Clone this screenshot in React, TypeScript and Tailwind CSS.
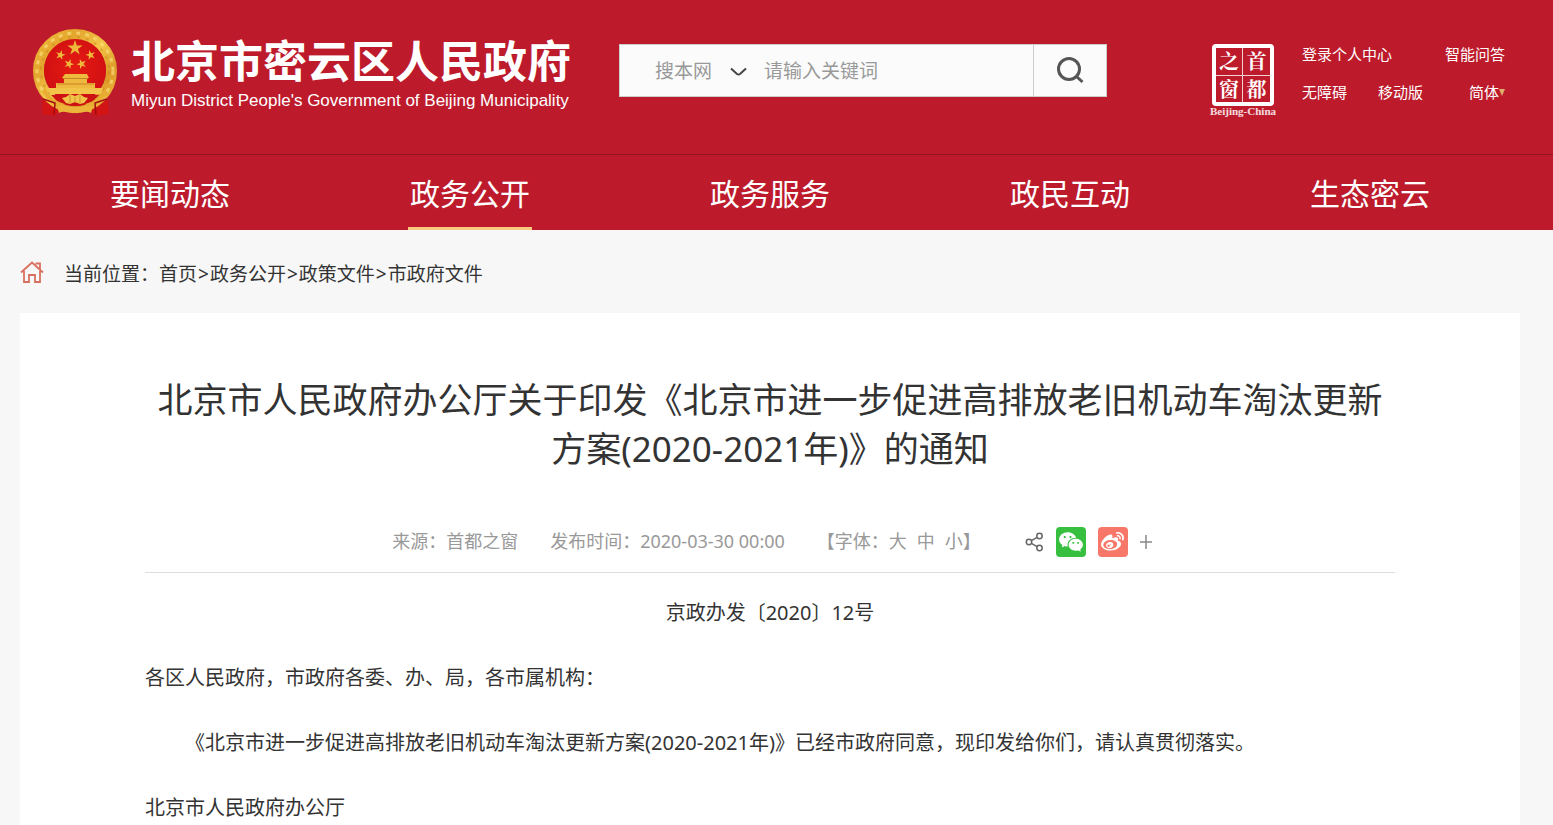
import React from 'react';
import { RiWechatFill, RiWeiboFill } from 'react-icons/ri';

const STAR = '0,-1 0.225,-0.309 0.951,-0.309 0.363,0.118 0.588,0.809 0,0.382 -0.588,0.809 -0.363,0.118 -0.951,-0.309 -0.225,-0.309';

function Star({ x, y, r, turn = 0 }: { x: number; y: number; r: number; turn?: number }) {
  return <polygon points={STAR} transform={`translate(${x} ${y}) rotate(${turn}) scale(${r})`} fill="#f0b83a" />;
}

function Emblem() {
  return (
    <svg viewBox="0 0 86 88" className="h-[88px] w-[86px] shrink-0" aria-hidden="true">
      <defs>
        <linearGradient id="gold" x1="0" y1="0" x2="1" y2="1">
          <stop offset="0" stopColor="#efb93a" />
          <stop offset="0.25" stopColor="#e3a52d" />
          <stop offset="0.5" stopColor="#f3c648" />
          <stop offset="0.75" stopColor="#dd9a28" />
          <stop offset="1" stopColor="#f0bd3e" />
        </linearGradient>
        <radialGradient id="field" cx="0.5" cy="0.45" r="0.6">
          <stop offset="0" stopColor="#e51b12" />
          <stop offset="1" stopColor="#cf0f12" />
        </radialGradient>
      </defs>
      <path d="M10 66h64l2 19-14 2-4-6H26l-4 6-13-2z" fill="#d21414" />
      <circle cx="42" cy="42" r="36.500" fill="none" stroke="url(#gold)" strokeWidth="11" />
      <circle cx="42" cy="42" r="38" fill="none" stroke="#f9dc78" strokeWidth="3" strokeDasharray="4 5" opacity="0.7" />
      <circle cx="42" cy="42" r="34" fill="none" stroke="#c9851f" strokeWidth="2" strokeDasharray="3 6" opacity="0.5" />
      <circle cx="42" cy="41" r="31" fill="url(#field)" />
      <Star x={42} y={19} r={8} />
      <Star x={27.5} y={26} r={5.2} turn={15} />
      <Star x={57.500} y={26} r={5.2} turn={-15} />
      <Star x={36} y={35} r={5.2} turn={20} />
      <Star x={48.500} y={35} r={5.2} turn={-20} />
      <path d="M32 45h22l2 4h-2v5h8v6H23v-6h8v-5h-2z" fill="#eeb93f" />
      <path d="M30 49.500h25M24 55h37" stroke="#c98322" strokeWidth="1" />
      <path d="M14 59h56l-2 6H17z" fill="#f3c44a" />
      <path d="M18 66h48l-6 6c-6 3-10 5-18 5s-12-2-18-5z" fill="#cc1213" />
      <path d="M12 59c4 9 11 14 20 16l-5 4c-8-3-14-9-17-16zM72 59c-4 9-11 14-20 16l5 4c8-3 14-9 17-16z" fill="#e8ac33" />
      <path d="M33 68l4-3 5 2 5-2 4 3 4 1-4 5-4 1-5-2-5 2-4-1-4-5z" fill="#f3c44a" />
      <path d="M37 66v8M42 68v6M47 66v8" stroke="#cf8e25" strokeWidth="1" />
      <path d="M24 77c8-2 11 2 18 1 7 1 10-3 18-1l-2 7c-7-3-10 1-16 0-6 1-9-3-16 0z" fill="#ecb439" />
      <path d="M10 70l12 4-1 12M74 70l-12 4 1 12" fill="none" stroke="#a00d10" strokeWidth="1.500" />
    </svg>
  );
}

function CapitalWindow() {
  return (
    <a href="#capital" className="flex w-[70px] shrink-0 flex-col items-center text-white" aria-label="首都之窗">
      <span className="grid h-[62px] w-[62px] grid-cols-2 rounded-sm border-4 border-white font-['Noto_Serif_CJK_SC','Noto_Sans_CJK_SC',serif] text-[20px] leading-[26px] font-bold">
        <span className="border-r border-b border-white/80 text-center">之</span>
        <span className="border-b border-white/80 text-center">首</span>
        <span className="border-r border-white/80 text-center">窗</span>
        <span className="text-center">都</span>
      </span>
      <span className="font-['Liberation_Serif',serif] text-[11px] leading-[10px] font-bold text-white/85">Beijing-China</span>
    </a>
  );
}

const navItems = ['要闻动态', '政务公开', '政务服务', '政民互动', '生态密云'];
const crumbs = ['首页', '政务公开', '政策文件', '市政府文件'];

function Header() {
  return (
    <header className="bg-[#bd1b2c] text-white">
      <div className="mr-12 ml-5 flex h-[154px] items-start">
        <a href="#home" className="mt-[29px] ml-[13px] flex shrink-0">
          <Emblem />
          <span className="mt-0.5 ml-3 flex flex-col whitespace-nowrap">
            <span className="text-[44px] leading-[60px] font-bold">北京市密云区人民政府</span>
            <span className="font-['Liberation_Sans',Arial,sans-serif] text-[17px] leading-5">Miyun District People's Government of Beijing Municipality</span>
          </span>
        </a>
        <form className="mt-11 ml-12 flex h-[53px] w-[488px] shrink-0 border border-[#ccc] bg-[#fbfbfb] text-[19px] text-[#999]" onSubmit={(e) => e.preventDefault()}>
          <button type="button" className="ml-[35px] flex items-center gap-[18px] pt-0.5">
            搜本网
            <svg viewBox="0 0 17 10" className="h-[10px] w-[17px]" fill="none" stroke="#444" strokeWidth="2">
              <path d="M1 1.500l6 5.500q1.500 1 3 0l6-5.500" />
            </svg>
          </button>
          <input aria-label="关键词" placeholder="请输入关键词" className="ml-[17px] min-w-0 flex-1 bg-transparent pt-0.5 outline-none placeholder:text-[#999]" />
          <button type="submit" aria-label="搜索" className="flex w-[73px] items-center justify-center border-l border-[#ccc]">
            <svg viewBox="0 0 28 28" className="h-7 w-7" fill="none" stroke="#555" strokeWidth="3">
              <circle cx="13" cy="12" r="10.500" />
              <path d="M20.500 19.500l6 5.500" />
            </svg>
          </button>
        </form>
        <div className="mt-11 ml-auto flex gap-6">
          <CapitalWindow />
          <div className="flex w-[203px] flex-col gap-[18px] text-[15px] leading-5">
            <div className="flex justify-between">
              <a href="#login">登录个人中心</a>
              <a href="#qa">智能问答</a>
            </div>
            <div className="flex">
              <a href="#access">无障碍</a>
              <a href="#mobile" className="ml-[31px]">移动版</a>
              <button type="button" className="ml-auto flex items-center">
                简体
                <svg viewBox="0 0 6 7" className="h-[7px] w-[6px]"><path d="M0 0h6L3 7z" fill="#dcae6c" /></svg>
              </button>
            </div>
          </div>
        </div>
      </div>
      <nav className="border-t border-[#8f1421]">
        <ul className="mr-[33px] ml-5 grid h-[75px] grid-cols-5 justify-items-center text-[30px]">
          {navItems.map((item, i) => (
            <li key={item} className={i === 1 ? 'h-[75px] border-b-3 border-[#f8c97f] px-0.5' : 'px-0.5'}>
              <a href={`#nav${i}`} className="block leading-[78px]">{item}</a>
            </li>
          ))}
        </ul>
      </nav>
    </header>
  );
}

function ShareBar() {
  return (
    <div className="flex items-center gap-3">
      <svg viewBox="0 0 19 20" className="h-5 w-[19px]" fill="none" stroke="#666" strokeWidth="1.500">
        <circle cx="4" cy="10" r="2.700" />
        <circle cx="14.500" cy="4" r="2.700" />
        <circle cx="14.500" cy="16" r="2.700" />
        <path d="M6.400 8.700l5.700-3.300M6.400 11.300l5.700 3.300" />
      </svg>
      <button type="button" aria-label="微信" className="flex h-[30px] w-[30px] items-center justify-center rounded-sm bg-[#37bf3f] text-[26px] text-white"><RiWechatFill /></button>
      <button type="button" aria-label="微博" className="flex h-[30px] w-[30px] items-center justify-center rounded-sm bg-[#f77768] text-[25px] text-white"><RiWeiboFill /></button>
      <button type="button" aria-label="更多">
        <svg viewBox="0 0 12 14" className="h-[14px] w-3" stroke="#888" strokeWidth="1.500"><path d="M0 7h12M6 0v14" /></svg>
      </button>
    </div>
  );
}

export default function App() {
  return (
    <div className="min-h-screen bg-[#f7f7f7] font-['Noto_Sans','Noto_Sans_CJK_SC',sans-serif] text-[#333]">
      <Header />
      <div className="mr-[33px] ml-5 flex h-[83px] items-center text-[19px]">
        <svg viewBox="0 0 24 22" className="mr-5 h-[22px] w-6" fill="none" stroke="#d9705f" strokeWidth="1.800">
          <path d="M1 11.500L12 1.500l11 10M4 10v11h5v-7h6v7h5V10M15.500 2.500h4.500V8" />
        </svg>
        <div className="flex pt-1.5">
          <span>当前位置：</span>
          {crumbs.map((c, i) => (
            <React.Fragment key={c}>
              {i > 0 && <span className="px-px">&gt;</span>}
              <a href={`#crumb${i}`}>{c}</a>
            </React.Fragment>
          ))}
        </div>
      </div>
      <main className="mr-[33px] ml-5 bg-white px-[125px] pt-[62px]">
        <h1 className="text-center text-[35px] leading-[49px]">北京市人民政府办公厅关于印发《北京市进一步促进高排放老旧机动车淘汰更新方案(2020-2021年)》的通知</h1>
        <div className="mt-[38px] flex h-[62px] items-center justify-center border-b border-[#ddd] pl-1 text-[18px] text-[#999]">
          <span>来源：首都之窗</span>
          <span className="ml-8">发布时间：2020-03-30 00:00</span>
          <span className="ml-8 flex">
            【字体：
            <button type="button">大</button>
            <button type="button" className="mx-2.5">中</button>
            <button type="button">小</button>】
          </span>
          <div className="ml-11"><ShareBar /></div>
        </div>
        <article className="pt-[7px] text-[20px] leading-[65px]">
          <p className="text-center">京政办发〔2020〕12号</p>
          <p>各区人民政府，市政府各委、办、局，各市属机构：</p>
          <p className="indent-10">《北京市进一步促进高排放老旧机动车淘汰更新方案(2020-2021年)》已经市政府同意，现印发给你们，请认真贯彻落实。</p>
          <p>北京市人民政府办公厅</p>
        </article>
      </main>
    </div>
  );
}
